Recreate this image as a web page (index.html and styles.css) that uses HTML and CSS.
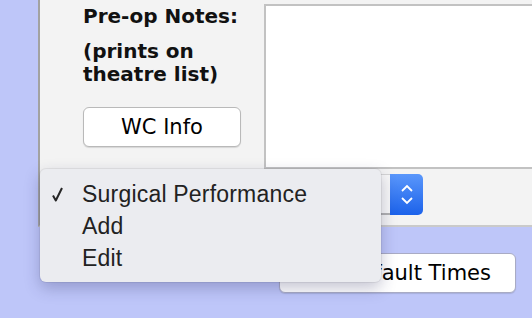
FILE: index.html
```html
<!DOCTYPE html>
<html lang="en">
<head>
    <meta charset="UTF-8">
    <meta name="viewport" content="width=device-width, initial-scale=1.0">
    <title>Pre-op Notes</title>
    <link rel="stylesheet" href="styles.css">
</head>
<body>
    <div class="panel">
        <div class="notes-row">
            <div class="notes-labels">
                <div class="label">Pre-op Notes:</div>
                <div class="label label-sub">(prints on theatre list)</div>
                <button class="mac-btn wc-btn">WC Info</button>
            </div>
            <textarea class="notes-box"></textarea>
        </div>
        <div class="popup-row">
            <div class="popup">
                <span class="popup-body"></span>
                <span class="stepper">
                    <svg width="14" height="22" viewBox="0 0 14 22">
                        <path d="M2 7 L7 2 L12 7" fill="none" stroke="#fff" stroke-width="1.8"/>
                        <path d="M2 14 L7 19 L12 14" fill="none" stroke="#fff" stroke-width="1.8"/>
                    </svg>
                </span>
            </div>
        </div>
    </div>

    <div class="bottom-row">
        <button class="mac-btn times-btn">Set Default Times</button>
    </div>

    <!-- open popup menu -->
    <div class="menu">
        <div class="menu-item">
            <span class="check">
                <svg width="11" height="15" viewBox="0 0 11 15">
                    <path d="M1 8.5 L3.8 13.5 L10 1" fill="none" stroke="#262626" stroke-width="2" stroke-linejoin="round"/>
                </svg>
            </span>Surgical Performance
        </div>
        <div class="menu-item"><span class="check"></span>Add</div>
        <div class="menu-item"><span class="check"></span>Edit</div>
    </div>
</body>
</html>
```

FILE: styles.css
```css
body {
    margin: 0;
    padding: 0;
    background-color: #bec6f9;
    font-family: 'DejaVu Sans', sans-serif;
    overflow: hidden;
    height: 318px;
}
.panel {
    margin-left: 38px;
    height: 227px;
    box-sizing: border-box;
    padding-top: 4px;
    background-color: #f3f3f3;
    border-left: 2px solid #a2a2a2;
    border-bottom: 2px solid #cacaca;
}
.notes-row {
    display: flex;
}
.notes-labels {
    width: 224px;
    flex-shrink: 0;
    box-sizing: border-box;
    padding-left: 43px;
}
.label {
    font-weight: bold;
    font-size: 20px;
    line-height: 23px;
    color: #111;
    margin-top: 1px;
}
.label-sub {
    margin-top: 12px;
    width: 150px;
}
.mac-btn {
    display: block;
    background-color: #fff;
    border: 1px solid #b9b9b9;
    border-radius: 6px;
    box-shadow: 0 1px 1px rgba(0,0,0,0.12);
    font-family: 'DejaVu Sans', sans-serif;
    font-size: 21px;
    color: #000;
    padding: 0;
    cursor: pointer;
}
.wc-btn {
    margin-top: 21px;
    width: 158px;
    height: 40px;
}
.notes-box {
    display: block;
    flex: 1;
    min-width: 0;
    height: 165px;
    box-sizing: border-box;
    border: 2px solid #c2c2c2;
    border-right: none;
    background-color: #fff;
    resize: none;
    margin: 0;
}
.popup-row {
    display: flex;
    margin-top: 5px;
    padding-left: 22px;
}
.popup {
    display: flex;
    width: 361px;
    height: 41px;
}
.popup-body {
    flex: 1;
    background-color: #f7f7f7;
    border-top: 1px solid #d4d4d4;
    border-bottom: 2px solid #b0b0b0;
    border-left: 1px solid #c4c4c4;
    border-radius: 5px 0 0 5px;
}
.stepper {
    width: 33px;
    display: flex;
    align-items: center;
    justify-content: center;
    background: linear-gradient(#5a97fb, #1c62ea);
    border-radius: 0 5px 5px 0;
}
.bottom-row {
    display: flex;
    padding-left: 279px;
    margin-top: 26px;
}
.times-btn {
    width: 237px;
    height: 40px;
    border-color: #a9abc4;
}
.menu {
    position: absolute;
    left: 40px;
    top: 169px;
    width: 341px;
    height: 113px;
    box-sizing: border-box;
    padding-top: 9px;
    background-color: #ebecf0;
    border-radius: 6px;
    box-shadow: 0 0 0 1px rgba(0,0,0,0.06), 0 6px 16px rgba(40,40,90,0.28);
    font-family: 'Liberation Sans', sans-serif;
    font-size: 23px;
    letter-spacing: 0.2px;
    color: #222;
}
.menu-item {
    display: flex;
    align-items: center;
    height: 32px;
    line-height: 32px;
}
.check {
    display: flex;
    align-items: center;
    width: 30px;
    height: 32px;
    padding-left: 12px;
}
```
